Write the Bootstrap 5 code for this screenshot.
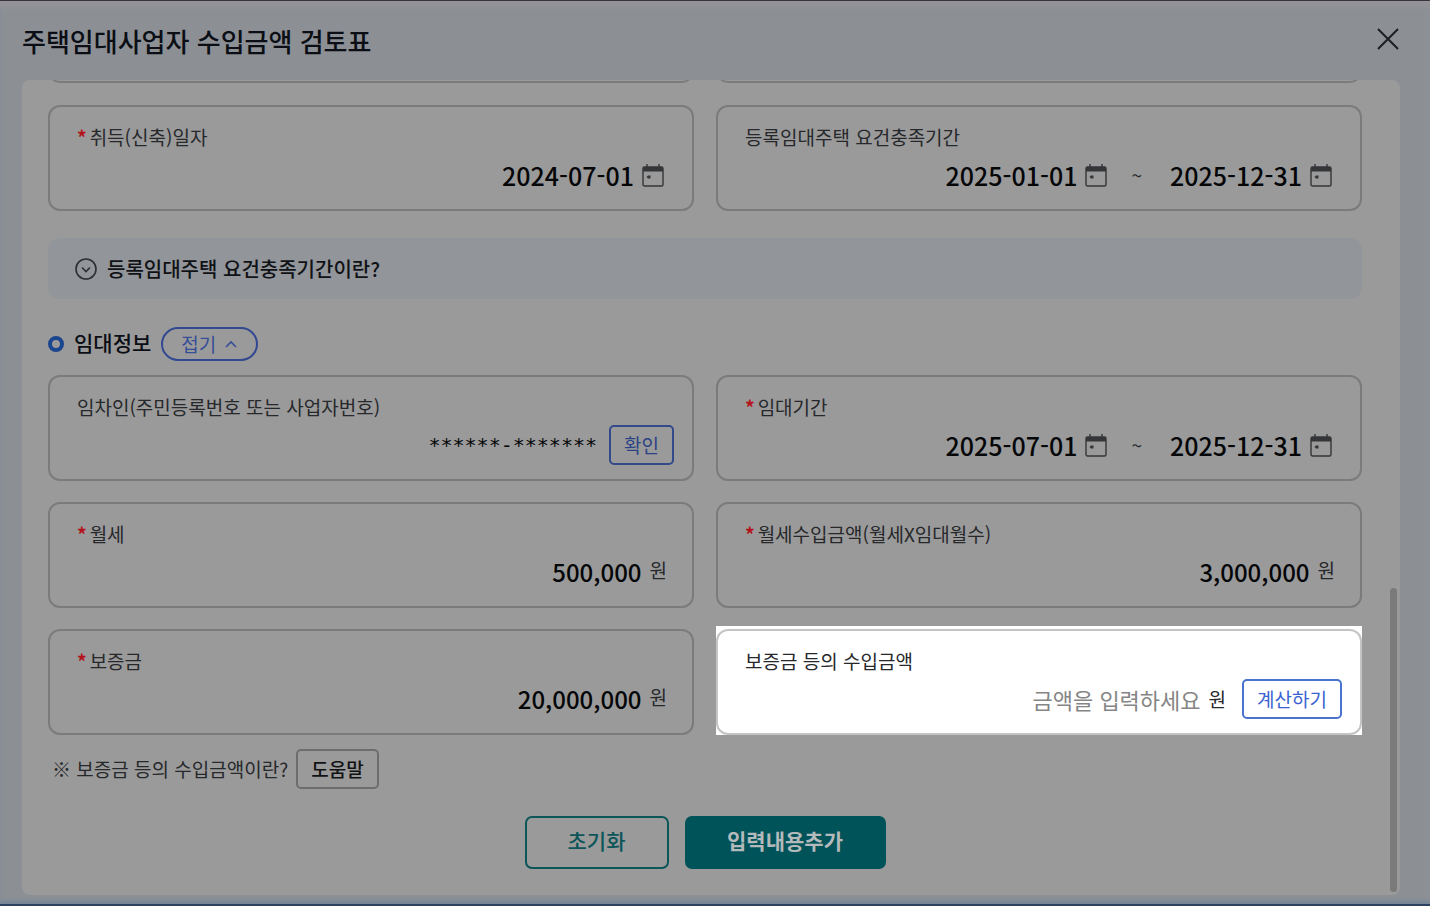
<!DOCTYPE html>
<html lang="ko">
<head>
<meta charset="utf-8">
<meta name="viewport" content="width=device-width, initial-scale=1">
<title>주택임대사업자 수입금액 검토표</title>
<link href="https://cdn.jsdelivr.net/npm/bootstrap@5.3.0/dist/css/bootstrap.min.css" rel="stylesheet">
<style>
  body { font-family: "Noto Sans CJK KR", sans-serif; font-size: 19px; line-height: 28px; color: #26282b; background: #8c9095; }
  .dialog-frame { border-top: 1px solid #39353b; border-bottom: 2px solid #2b4263; box-shadow: inset 0 8px 6px -3px #979399, inset 0 -4px 4px -1px #75849a, inset -5px 0 5px -3px #96969b; padding: 0 30px 9px 22px; }
  .dialog-head { height: 79px; }
  .dialog-title { font-size: 26px; line-height: 36px; font-weight: 500; color: #0b0e14; }
  .close-btn { color: #1c1f24; }
  .panel { background: #9a9a9a; border-radius: 8px; padding: 0 38px 26px 26px; }
  .scroll-thumb { right: 3px; bottom: 3px; width: 7px; height: 304px; border-radius: 4px; background: #7a7a7b; }
  .pair { display: grid; grid-template-columns: 1fr 1fr; gap: 21px 22px; }
  .clipped { height: 3px; overflow: hidden; align-content: end; margin-bottom: 22px; }
  .field { height: 106px; border: 2px solid #7b7b7c; border-radius: 12px; padding: 16px 28px 0 27px; }
  .field-wide { padding-right: 18px; }
  .field-won { padding-right: 25px; }
  .field label { display: block; }
  .req::before { content: "*"; color: #b3131a; font-weight: 700; margin-right: 3px; }
  .value-row { height: 40px; margin-top: 4px; }
  .val { border: 0; background: transparent; padding: 0; text-align: right; color: #050608; font-family: "Noto Sans CJK KR", sans-serif; font-size: 24px; line-height: 32px; font-weight: 500; }
  .val-date { width: 136px; font-size: 25px; }
  .val-mask { width: 180px; font-family: "DejaVu Sans Mono", monospace; font-size: 20px; font-weight: 400; }
  .val-hint { font-size: 22px; font-weight: 400; }
  .val-hint::placeholder { color: #858585; opacity: 1; }
  .cal { width: 22px; height: 24px; color: #343638; }
  .spot { background: #fff; box-shadow: 0 -3px 0 #fff; }
  .spot .field { border-color: #c4c4c4; }
  .tool-btn { height: 40px; padding: 0 13px; border: 2px solid #32498a; border-radius: 5px; background: transparent; color: #2b4385; font-size: 19px; line-height: 34px; }
  .spot .tool-btn { border-color: #4a73cf; color: #3a62d0; }
  .help-btn { border-color: #6d6d6e; color: #111214; font-weight: 500; }
  .help-row { margin: 14px 0 27px; }
  .info-bar { margin: 27px 0 28px; height: 61px; padding: 0 27px; gap: 10px; border: 0; border-radius: 12px; background: #92959a; color: #101216; font-size: 20px; font-weight: 500; }
  .fold-row { gap: 10px; margin-bottom: 14px; }
  .ring { width: 16px; height: 16px; border: 4px solid #1a458f; border-radius: 50%; }
  .section-title { font-size: 21px; line-height: 28px; font-weight: 500; color: #0b0e14; }
  .fold-btn { height: 34px; padding: 0 18px; border: 2px solid #324992; border-radius: 17px; background: transparent; color: #364e98; line-height: 30px; }
  .act-btn { height: 53px; border: 2px solid #0c5558; border-radius: 7px; padding-bottom: 6px; font-size: 21px; font-weight: 500; color: #0c5558; background: transparent; }
  .act-reset { width: 144px; }
  .act-add { width: 201px; background: #005359; border-color: #005359; color: #b4babb; font-weight: 700; }
</style>
</head>
<body>
<svg class="d-none" xmlns="http://www.w3.org/2000/svg">
  <symbol id="cal" viewBox="0 0 22 24"><path d="M1 4h20v4.500H1z" fill="currentColor"/><path d="M5 1v4M17 1v4" stroke="currentColor" stroke-width="1.4"/><rect x="1" y="4" width="20" height="19" rx="1.500" fill="none" stroke="currentColor" stroke-width="1.4"/><path d="M4.500 14 6 12.500h2.500v3H6z" fill="currentColor"/></symbol>
</svg>
<div class="dialog-frame min-vh-100 d-flex flex-column">
  <header class="dialog-head d-flex align-items-center justify-content-between">
    <h1 class="dialog-title mb-0">주택임대사업자 수입금액 검토표</h1>
    <button type="button" class="close-btn btn p-0 pb-1 border-0 d-flex" aria-label="닫기"><svg width="24" height="24" viewBox="0 0 24 24" fill="none" stroke="currentColor" stroke-width="2"><path d="M2 2 22 22M22 2 2 22"/></svg></button>
  </header>

  <main class="panel flex-grow-1 position-relative">
    <div class="pair clipped"><div class="field"></div><div class="field"></div></div>
    <div class="pair">
      <div class="field">
        <label class="req" for="acq">취득(신축)일자</label>
        <div class="value-row d-flex align-items-center justify-content-end gap-2">
          <input class="val val-date" id="acq" value="2024-07-01"><svg class="cal"><use href="#cal"/></svg>
        </div>
      </div>
      <div class="field">
        <label for="reqFrom">등록임대주택 요건충족기간</label>
        <div class="value-row d-flex align-items-center justify-content-end gap-2">
          <input class="val val-date" id="reqFrom" value="2025-01-01"><svg class="cal"><use href="#cal"/></svg>
          <span class="mx-3">~</span>
          <input class="val val-date" aria-label="요건충족기간 종료일" value="2025-12-31"><svg class="cal"><use href="#cal"/></svg>
        </div>
      </div>
    </div>

    <button type="button" class="info-bar w-100 d-flex align-items-center">
      <svg width="22" height="22" viewBox="0 0 22 22" fill="none" stroke="#2c2f33" stroke-width="1.6"><circle cx="11" cy="11" r="10"/><path d="m7 9.500 4 4 4-4"/></svg>
      <span>등록임대주택 요건충족기간이란?</span>
    </button>

    <div class="fold-row d-flex align-items-center">
      <span class="ring"></span>
      <h2 class="section-title mb-0 pb-1">임대정보</h2>
      <button type="button" class="fold-btn d-flex align-items-center gap-2"><span>접기</span><svg width="14" height="10" viewBox="0 0 14 10" fill="none" stroke="currentColor" stroke-width="1.6"><path d="m2 8 5-5 5 5"/></svg></button>
    </div>

    <div class="pair">
      <div class="field field-wide">
        <label for="tenant">임차인(주민등록번호 또는 사업자번호)</label>
        <div class="value-row d-flex align-items-center justify-content-end gap-2">
          <input class="val val-mask" id="tenant" value="******-*******">
          <button type="button" class="tool-btn ms-1">확인</button>
        </div>
      </div>
      <div class="field">
        <label class="req" for="from">임대기간</label>
        <div class="value-row d-flex align-items-center justify-content-end gap-2">
          <input class="val val-date" id="from" value="2025-07-01"><svg class="cal"><use href="#cal"/></svg>
          <span class="mx-3">~</span>
          <input class="val val-date" aria-label="임대기간 종료일" value="2025-12-31"><svg class="cal"><use href="#cal"/></svg>
        </div>
      </div>
      <div class="field field-won">
        <label class="req" for="rent">월세</label>
        <div class="value-row d-flex align-items-center justify-content-end gap-2">
          <input class="val" id="rent" value="500,000"><span class="pb-1">원</span>
        </div>
      </div>
      <div class="field field-won">
        <label class="req" for="income">월세수입금액(월세X임대월수)</label>
        <div class="value-row d-flex align-items-center justify-content-end gap-2">
          <input class="val" id="income" value="3,000,000"><span class="pb-1">원</span>
        </div>
      </div>
      <div class="field field-won">
        <label class="req" for="deposit">보증금</label>
        <div class="value-row d-flex align-items-center justify-content-end gap-2">
          <input class="val" id="deposit" value="20,000,000"><span class="pb-1">원</span>
        </div>
      </div>
      <div class="spot">
        <div class="field field-wide">
          <label for="depIncome">보증금 등의 수입금액</label>
          <div class="value-row d-flex align-items-center justify-content-end gap-2">
            <input class="val val-hint" id="depIncome" placeholder="금액을 입력하세요"><span class="me-2">원</span>
            <button type="button" class="tool-btn">계산하기</button>
          </div>
        </div>
      </div>
    </div>

    <div class="help-row d-flex align-items-center gap-2 ps-1">
      <span>※ 보증금 등의 수입금액이란?</span>
      <button type="button" class="tool-btn help-btn">도움말</button>
    </div>
    <div class="d-flex justify-content-center gap-3">
      <button type="button" class="act-btn act-reset">초기화</button>
      <button type="button" class="act-btn act-add">입력내용추가</button>
    </div>
    <div class="scroll-thumb position-absolute"></div>
  </main>
</div>
<script src="https://cdn.jsdelivr.net/npm/bootstrap@5.3.0/dist/js/bootstrap.bundle.min.js"></script>
</body>
</html>
